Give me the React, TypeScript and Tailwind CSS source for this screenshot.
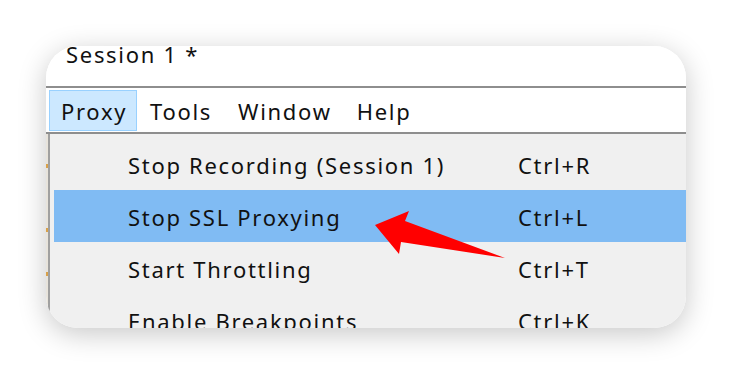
import React from "react";

const items = [
  { label: "Stop Recording (Session 1)", key: "Ctrl+R", active: false },
  { label: "Stop SSL Proxying", key: "Ctrl+L", active: true },
  { label: "Start Throttling", key: "Ctrl+T", active: false },
  { label: "Enable Breakpoints", key: "Ctrl+K", active: false },
];

export default function App() {
  return (
    <div
      className="relative w-[732px] h-[374px] bg-white overflow-hidden pl-[46px] pt-[46px]"
      style={{ fontFamily: '"Noto Sans", "Open Sans", sans-serif' }}
    >
      <div className="w-[640px] h-[282px] rounded-[32px] overflow-hidden bg-white shadow-[0_6px_28px_rgba(0,0,0,0.22)] flex flex-col text-[#111] text-[22px] tracking-[1.7px]">
        <div className="h-[40px] shrink-0 pl-[20px] bg-white">
          <div className="leading-[22px] -mt-[3px]">Session 1 *</div>
        </div>
        <div className="h-[2px] shrink-0 bg-[#8e8e8e]" />
        <div className="h-[44px] shrink-0 bg-white flex items-stretch pt-[2px] pb-[1px]">
          <div className="ml-[3px] w-[88px] border border-[#99d1ff] bg-[#cce8ff] pl-[11px] pt-[1px] flex items-center">Proxy</div>
          <div className="ml-[13px] pt-[1px] flex items-center">Tools</div>
          <div className="ml-[26px] pt-[1px] flex items-center">Window</div>
          <div className="ml-[25px] pt-[1px] flex items-center">Help</div>
        </div>
        <div className="h-[2px] shrink-0 bg-[#8e8e8e]" />
        <div className="flex-1 flex">
          <div className="w-[2px] bg-[#e8e4dc] flex flex-col">
            <div className="h-[30px]" />
            <div className="h-[4px] bg-[#d9a14a]" />
            <div className="h-[60px]" />
            <div className="h-[4px] bg-[#d9a14a]" />
            <div className="h-[40px]" />
            <div className="h-[4px] bg-[#d9a14a]" />
          </div>
          <div className="w-[2px] bg-[#a0a0a0]" />
          <div className="flex-1 bg-[#f0f0f0] pt-[4px] pl-[4px]">
            {items.map((it) => (
              <div
                key={it.label}
                className={`h-[52px] flex items-center pl-[74px] pt-[2px] ${it.active ? "bg-[#80bbf3]" : ""}`}
              >
                <div className="w-[390px] whitespace-nowrap">{it.label}</div>
                <div className="whitespace-nowrap">{it.key}</div>
              </div>
            ))}
          </div>
        </div>
      </div>
      <svg className="absolute left-0 top-0" width="732" height="374" viewBox="0 0 732 374">
        <polygon
          points="375,225 409,211 405,221 505,258 401,242 399,254"
          fill="#ff0000"
        />
      </svg>
    </div>
  );
}
